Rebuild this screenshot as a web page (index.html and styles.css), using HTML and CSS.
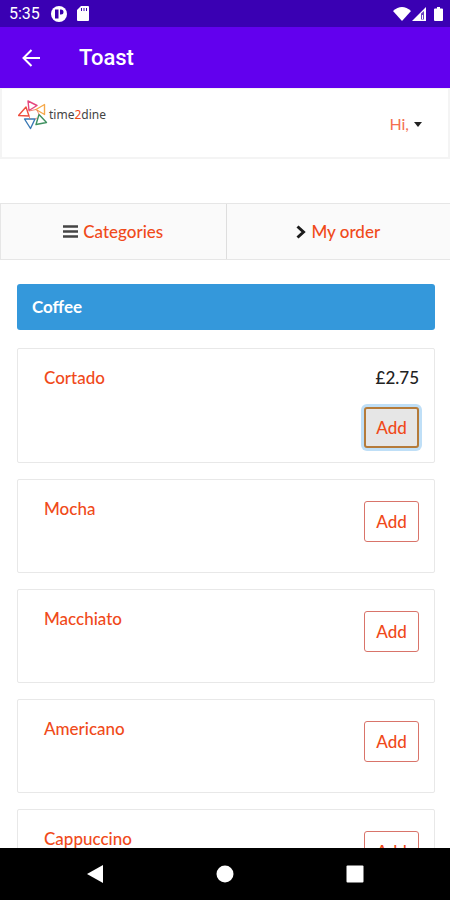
FILE: index.html
```html
<!DOCTYPE html>
<html lang="en">
<head>
<meta charset="utf-8">
<meta name="viewport" content="width=device-width, initial-scale=1">
<title>Toast</title>
<link rel="stylesheet" href="styles.css">
</head>
<body>
<div class="status">
  <span class="clock">5:35</span>
  <svg class="status-app" width="16" height="16" viewBox="0 0 16 16"><circle cx="8" cy="8" r="8" fill="#fff"/><path d="M4 3.500h3.500v9H4zM9 3.500h1a2.500 2.500 0 0 1 0 5H9z" fill="#3a00b0"/></svg>
  <svg class="status-card" width="12" height="15" viewBox="0 0 12 15"><path d="M4 0h7a1 1 0 0 1 1 1v13a1 1 0 0 1-1 1H1a1 1 0 0 1-1-1V4z" fill="#fff"/><path d="M4.500 2v3M7 2v3M9.500 2v3" stroke="#3a00b0"/></svg>
  <span class="status-right">
    <svg width="18" height="14" viewBox="0 0 18 14"><path d="M0 4Q9-4 18 4L9 14z" fill="#fff"/></svg>
    <svg width="14" height="14" viewBox="0 0 14 14"><path d="M14 0v14H0z" fill="#fff"/><path d="M9 6.500l3-2.500v8.500H9z" fill="#3a00b0" opacity=".75"/><path d="M10.500 8v4" stroke="#fff"/></svg>
    <svg class="battery" width="9" height="14" viewBox="0 0 9 14"><path d="M3 0h3v1.500h2a1 1 0 0 1 1 1V13a1 1 0 0 1-1 1H1a1 1 0 0 1-1-1V2.500a1 1 0 0 1 1-1h2z" fill="#fff"/></svg>
  </span>
</div>
<header class="appbar">
  <button class="back" aria-label="Back"><svg width="18" height="18" viewBox="0 0 18 18"><path d="M18 9H1.500M9.500 1L1.500 9l8 8" fill="none" stroke="#fff" stroke-width="2"/></svg></button>
  <h1>Toast</h1>
</header>
<main class="page">
  <div class="site">
    <a class="logo" href="#">
      <svg width="30" height="30" viewBox="0 0 30 30" fill="none" stroke-width="1.400" stroke-linejoin="round">
        <path d="M10 1l9 4.500-8 5z" stroke="#e5487f"/>
        <path d="M8 7l3 9-10.500-.5z" stroke="#ee4f3f"/>
        <path d="M26.500 4.500v10L18 9.500z" stroke="#f5a94a"/>
        <path d="M21 14.500l7.500 8-10.500 2z" stroke="#3f9160"/>
        <path d="M6.500 19H17l-4.500 9.500z" stroke="#3978b4"/>
        <path d="M11 11l7-1.500M11 16l1 3M19 10l2 4.500M17 19l2-1" stroke="#ee6a58" stroke-width=".8"/>
      </svg>
      <span class="wordmark">time<b>2</b>dine</span>
    </a>
    <a class="account" href="#">Hi, <svg width="8" height="5" viewBox="0 0 8 5"><path d="M0 0h8L4 5z" fill="#222"/></svg></a>
  </div>
  <nav class="tabs">
    <a href="#"><svg width="15" height="13" viewBox="0 0 15 13"><path d="M0 1.500h15M0 6.500h15M0 11.500h15" stroke="#444" stroke-width="2.500"/></svg>Categories</a>
    <a href="#"><svg width="10" height="14" viewBox="0 0 10 14"><path d="M1.500 1.500L7.500 7l-6 5.500" fill="none" stroke="#1b1b1b" stroke-width="3"/></svg>My order</a>
  </nav>
  <section class="menu">
    <h2>Coffee</h2>
    <article class="item priced"><a href="#">Cortado</a><div class="buy"><span>£2.75</span><button class="add active">Add</button></div></article>
    <article class="item"><a href="#">Mocha</a><div class="buy"><button class="add">Add</button></div></article>
    <article class="item"><a href="#">Macchiato</a><div class="buy"><button class="add">Add</button></div></article>
    <article class="item"><a href="#">Americano</a><div class="buy"><button class="add">Add</button></div></article>
    <article class="item"><a href="#">Cappuccino</a><div class="buy"><button class="add">Add</button></div></article>
  </section>
</main>
<footer class="system">
  <button aria-label="Back"><svg width="18" height="20" viewBox="0 0 18 20"><path d="M17 1v18L1 10z" fill="#fff"/></svg></button>
  <button aria-label="Home"><svg width="18" height="18" viewBox="0 0 18 18"><circle cx="9" cy="9" r="8.500" fill="#fff"/></svg></button>
  <button aria-label="Recent apps"><svg width="18" height="18" viewBox="0 0 18 18"><rect width="17" height="17" x=".5" y=".5" rx="1" fill="#fff"/></svg></button>
</footer>
</body>
</html>
```
FILE: styles.css
```css
* { box-sizing: border-box; }
body {
  margin: 0;
  height: 100vh;
  display: flex;
  flex-direction: column;
  overflow: hidden;
  background: #fff;
  color: #222;
  font: 16px/24px Lato, sans-serif;
}
svg { display: block; flex: none; }
a { color: #f04a1a; text-decoration: none; }
button { padding: 0; border: 0; background: none; font: inherit; }
.status {
  flex: none;
  display: flex;
  align-items: center;
  height: 27px;
  padding: 0 7px 0 9px;
  background: #3a00b3;
  color: #fff;
  font: 400 16px/27px Roboto, sans-serif;
}
.clock { width: 42px; }
.status-card { margin-left: 10px; }
.status-right { display: flex; gap: 1px; margin-left: auto; }
.battery { margin-left: 7px; }
.appbar {
  flex: none;
  display: flex;
  align-items: center;
  gap: 39px;
  height: 61px;
  padding: 0 22px;
  background: #6200ee;
  color: #fff;
}
.appbar h1 { margin: 0; font: 500 22px/28px Roboto, sans-serif; }
.page { flex: 1; min-height: 0; overflow: hidden; }
.site {
  display: flex;
  justify-content: space-between;
  align-items: flex-start;
  height: 71px;
  padding: 11px 26px 0 16px;
  border: 2px solid #f4f4f4;
  border-top-width: 1px;
}
.logo { display: flex; align-items: center; gap: 1px; color: #444; }
.wordmark { font: 12px/18px "Noto Sans", sans-serif; }
.wordmark b { color: #f04a1a; font-weight: 400; }
.account { display: flex; align-items: center; gap: 5px; padding-top: 12px; color: #f4704f; }
.tabs {
  display: grid;
  grid-template-columns: 1fr 1fr;
  margin-top: 44px;
  border: 1px solid #e6e6e6;
  border-right: 0;
  background: #fafafa;
}
.tabs a {
  display: flex;
  align-items: center;
  justify-content: center;
  gap: 5px;
  height: 55px;
  font-weight: 500;
  font-size: 17px;
}
.tabs a + a { border-left: 1px solid #dedede; }
.menu {
  display: flex;
  flex-direction: column;
  gap: 16px;
  padding: 24px 15px 0 17px;
}
.menu h2 {
  margin: 0 0 2px;
  padding: 11px 15px;
  border-radius: 3px;
  background: #3498db;
  color: #fff;
  font: 700 17px/24px Lato, sans-serif;
}
.item {
  display: flex;
  justify-content: space-between;
  align-items: flex-start;
  padding: 17px 15px 30px 26px;
  border: 1px solid #e8e8e8;
  border-radius: 2px;
  font-size: 17px;
  font-weight: 500;
}
.priced { padding-bottom: 14px; }
.buy { display: flex; flex-direction: column; align-items: flex-end; padding-top: 4px; }
.priced .buy { gap: 17px; padding-top: 0; }
.add {
  width: 55px;
  height: 41px;
  border: 1px solid #d9746a;
  border-radius: 3px;
  background: #fff;
  color: #f04a1a;
  font-size: 17px;
}
.active {
  border: 2px solid #b57b3a;
  background: #e6e6e6;
  box-shadow: 0 0 0 3px #bfdff7;
}
.system {
  flex: none;
  display: flex;
  justify-content: center;
  align-items: center;
  gap: 112px;
  height: 52px;
  background: #000;
}
```
